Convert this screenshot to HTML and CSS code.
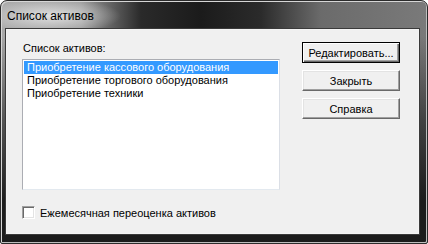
FILE: index.html
```html
<!DOCTYPE html>
<html lang="ru">
  <head>
    <meta charset="utf-8" />
    <title>Список активов</title>
    <link rel="stylesheet" href="styles.css">
  </head>
  <body>
    <div class="window">
      <div class="titlebar">Список активов</div>
      <div class="client">
        <div class="left">
          <div class="label">Список активов:</div>
          <ul class="listbox">
            <li class="selected">Приобретение кассового оборудования</li>
            <li>Приобретение торгового оборудования</li>
            <li>Приобретение техники</li>
          </ul>
          <label class="check">
            <span class="box"></span>
            <span>Ежемесячная переоценка активов</span>
          </label>
        </div>
        <div class="buttons">
          <button class="btn default">Редактировать...</button>
          <button class="btn">Закрыть</button>
          <button class="btn">Справка</button>
        </div>
      </div>
    </div>
  </body>
</html>
```

FILE: styles.css
```css
html,
body {
  margin: 0;
  height: 100%;
  background: #fff;
}

body {
  font-family: "Liberation Sans", Arial, sans-serif;
  font-size: 11px;
  color: #000;
}

.window {
  box-sizing: border-box;
  width: 428px;
  height: 244px;
  display: flex;
  flex-direction: column;
  border: 1px solid #2b2b2b;
  border-radius: 7px 7px 2px 2px;
  box-shadow: inset 1px 1px 0 #d6d6d6, inset -1px -1px 0 #bdbdbd;
  background:
    radial-gradient(ellipse 70px 18px at 50px 15px, rgba(235, 235, 235, 0.85), rgba(235, 235, 235, 0) 100%),
    linear-gradient(to bottom, rgba(28, 28, 28, 0) 35px, rgba(28, 28, 28, 0.6) 120px, #1c1c1c 200px),
    linear-gradient(to right, #a9a9a9 0, #9a9a9a 80px, #2a2a2a 140px, #1b1b1b 200px, #2b2b2b 260px, #6b6b6b 320px, #7a7a7a 428px);
}

.titlebar {
  height: 29px;
  display: flex;
  align-items: center;
  padding-left: 6px;
  font-size: 12px;
  color: #000;
}

.client {
  flex: 1;
  margin: 0 9px 10px 6px;
  display: flex;
  padding: 12px 18px 0 15px;
  background: #f0f0f0;
  box-shadow: 0 0 0 1px #f4f4f4, 0 0 0 2px #3a3a3a;
}

.left {
  width: 258px;
  display: flex;
  flex-direction: column;
}

.label {
  height: 17px;
  padding-left: 1px;
  line-height: 12px;
}

.listbox {
  box-sizing: border-box;
  height: 131px;
  margin: 0;
  padding: 1px;
  list-style: none;
  background: #fff;
  border: 1px solid #abadb3;
  border-right-color: #dbdfe6;
  border-bottom-color: #e3e9ef;
}

.listbox li {
  height: 13px;
  line-height: 13px;
  padding-left: 3px;
  white-space: nowrap;
}

.listbox li.selected {
  background: #3399ff;
  color: #fff;
}

.check {
  display: flex;
  align-items: center;
  gap: 5px;
  margin-top: 16px;
}

.box {
  box-sizing: border-box;
  width: 13px;
  height: 13px;
  background: #fff;
  border: 1px solid;
  border-color: #a0a0a0 #fff #fff #a0a0a0;
  box-shadow: inset 1px 1px 0 #696969, inset -1px -1px 0 #e3e3e3;
}

.buttons {
  margin-left: 22px;
  display: flex;
  flex-direction: column;
  gap: 7px;
}

.btn {
  box-sizing: border-box;
  width: 98px;
  height: 21px;
  padding: 0;
  font-family: inherit;
  font-size: 11px;
  color: #000;
  background: #f0f0f0;
  border: 1px solid;
  border-color: #fff #696969 #696969 #fff;
  box-shadow: inset -1px -1px 0 #a0a0a0, inset 1px 1px 0 #e3e3e3;
}

.btn.default {
  border: 1px solid #000;
  box-shadow: inset 1px 1px 0 #fff, inset -1px -1px 0 #696969, inset -2px -2px 0 #a0a0a0;
}
```
